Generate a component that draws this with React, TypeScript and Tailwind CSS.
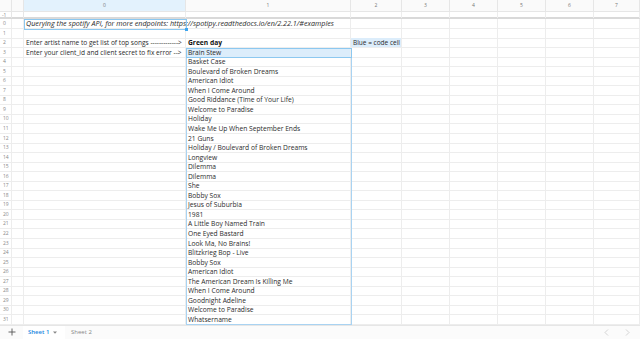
import React from 'react'

const songs = [
  'Brain Stew',
  'Basket Case',
  'Boulevard of Broken Dreams',
  'American Idiot',
  'When I Come Around',
  'Good Riddance (Time of Your Life)',
  'Welcome to Paradise',
  'Holiday',
  'Wake Me Up When September Ends',
  '21 Guns',
  'Holiday / Boulevard of Broken Dreams',
  'Longview',
  'Dilemma',
  'Dilemma',
  'She',
  'Bobby Sox',
  'Jesus of Suburbia',
  '1981',
  'A Little Boy Named Train',
  'One Eyed Bastard',
  'Look Ma, No Brains!',
  'Blitzkrieg Bop - Live',
  'Bobby Sox',
  'American Idiot',
  'The American Dream Is Killing Me',
  'When I Come Around',
  'Goodnight Adeline',
  'Welcome to Paradise',
  'Whatsername',
]

const gridCols = 'grid grid-cols-[12px_12px_162px_165px_51px_48px_48px_48px_48px_46px]'
const cell = 'border-r border-b border-[#ededed] whitespace-nowrap overflow-visible leading-[9px] pl-[2px]'

// contenu des colonnes 0, 1 et 2 pour chaque ligne
const cellText = (row: number): [string, string, string] => {
  if (row === 2) return ['Enter artist name to get list of top songs ------------->', 'Green day', 'Blue = code cell']
  if (row === 3) return ['Enter your client_id and client secret to fix error -->', songs[0], '']
  if (row > 3) return ['', songs[row - 3], '']
  return ['', '', '']
}

const App = () => {
  const rows = Array.from({ length: 32 }, (_, i) => i)

  return (
    <div className="w-[640px] h-[339px] bg-white overflow-hidden flex flex-col text-[#2b2b2b] font-['Open_Sans',sans-serif] relative">
      {/* en-tête des colonnes */}
      <div className={`${gridCols} h-[12px] text-[5px] text-[#777]`}>
        <div className="border-r border-b border-[#e6e6e6] bg-[#fafafa]" />
        <div className="border-r border-b border-[#e6e6e6] bg-[#fafafa]" />
        {['0', '1', '2', '3', '4', '5', '6', '7'].map((c) => (
          <div
            key={c}
            className={`border-r border-b border-[#e6e6e6] flex items-center justify-center ${c === '0' ? 'bg-[#e3f2fd]' : 'bg-[#fafafa]'}`}
          >
            {c}
          </div>
        ))}
      </div>

      {/* ligne -1, figée */}
      <div className={`${gridCols} h-[7px] border-b-2 border-[#d9d9d9]`}>
        <div className="border-r border-[#e6e6e6] text-[5px] text-[#888] leading-[6px] pl-[2px]">-1</div>
        <div className="border-r border-[#e6e6e6]" />
        {Array.from({ length: 8 }, (_, i) => (
          <div key={i} className="border-r border-[#ededed]" />
        ))}
      </div>

      {rows.map((r) => {
        const [a, b, c] = cellText(r)
        return (
          <div key={r} className={`${gridCols} h-[9.55px] text-[6.7px]`}>
            <div className="border-r border-b border-[#ededed] text-[5px] text-[#888] leading-[9px] pl-[3px]">{r}</div>
            <div className="border-r border-b border-[#ededed]" />
            <div className={`${cell} relative z-10 ${r === 0 ? 'italic text-[7.2px]' : 'text-[6.6px]'}`}>
              {r === 0 ? 'Querying the spotify API, for more endpoints: https://spotipy.readthedocs.io/en/2.22.1/#examples' : a}
            </div>
            <div className={`${cell} ${r === 2 ? 'font-bold text-[#111]' : ''} ${r === 3 ? 'bg-[#dcedfb]' : ''}`}>{b}</div>
            <div className={`${cell} ${r === 2 ? 'bg-[#dcedfb] text-[6.5px]' : ''}`}>{c}</div>
            <div className={cell} />
            <div className={cell} />
            <div className={cell} />
            <div className={cell} />
            <div className={cell} />
          </div>
        )
      })}

      {/* sélection de la cellule 0,0 */}
      <div className="absolute left-[24px] top-[19px] w-[163px] h-[10.5px] border border-[#8cc8f0] pointer-events-none z-20" />
      <div className="absolute left-[184.5px] top-[27.5px] w-[3px] h-[3px] bg-[#3da5ee] z-30" />
      {/* plage en colonne 1 */}
      <div className="absolute left-[186px] top-[47.5px] w-[165.5px] h-[277.5px] border border-[#a9d3f2] pointer-events-none z-20" />
      <div className="absolute left-[186px] top-[47.5px] w-[165.5px] h-[10.5px] border border-[#8cc8f0] pointer-events-none z-20" />

      {/* barre des feuilles */}
      <div className="flex-1 flex items-stretch border-t border-[#e6e6e6] bg-[#fbfbfb] text-[6px]">
        <div className="w-[23px] flex items-center justify-center">
          <svg width="8" height="8" viewBox="0 0 8 8" fill="none" stroke="#555" strokeWidth="0.9">
            <path d="M4 0.5v7M0.5 4h7" />
          </svg>
        </div>
        <div className="w-[42px] bg-white flex items-center pl-[5px] gap-[4px] text-[#1a86e0] font-semibold">
          <span>Sheet 1</span>
          <svg width="4" height="3" viewBox="0 0 4 3">
            <path d="M0 0.5h4L2 2.7z" fill="#888" />
          </svg>
        </div>
        <div className="flex items-center pl-[6px] text-[#888]">Sheet 2</div>
        <div className="flex-1" />
        <div className="flex items-center gap-[16px] pr-[10px]">
          <svg width="5" height="7" viewBox="0 0 5 7" fill="none" stroke="#c4c4c4" strokeWidth="0.7">
            <path d="M4 0.5L1 3.5L4 6.5" />
          </svg>
          <svg width="5" height="7" viewBox="0 0 5 7" fill="none" stroke="#c4c4c4" strokeWidth="0.7">
            <path d="M1 0.5L4 3.5L1 6.5" />
          </svg>
        </div>
      </div>
    </div>
  )
}

export default App
